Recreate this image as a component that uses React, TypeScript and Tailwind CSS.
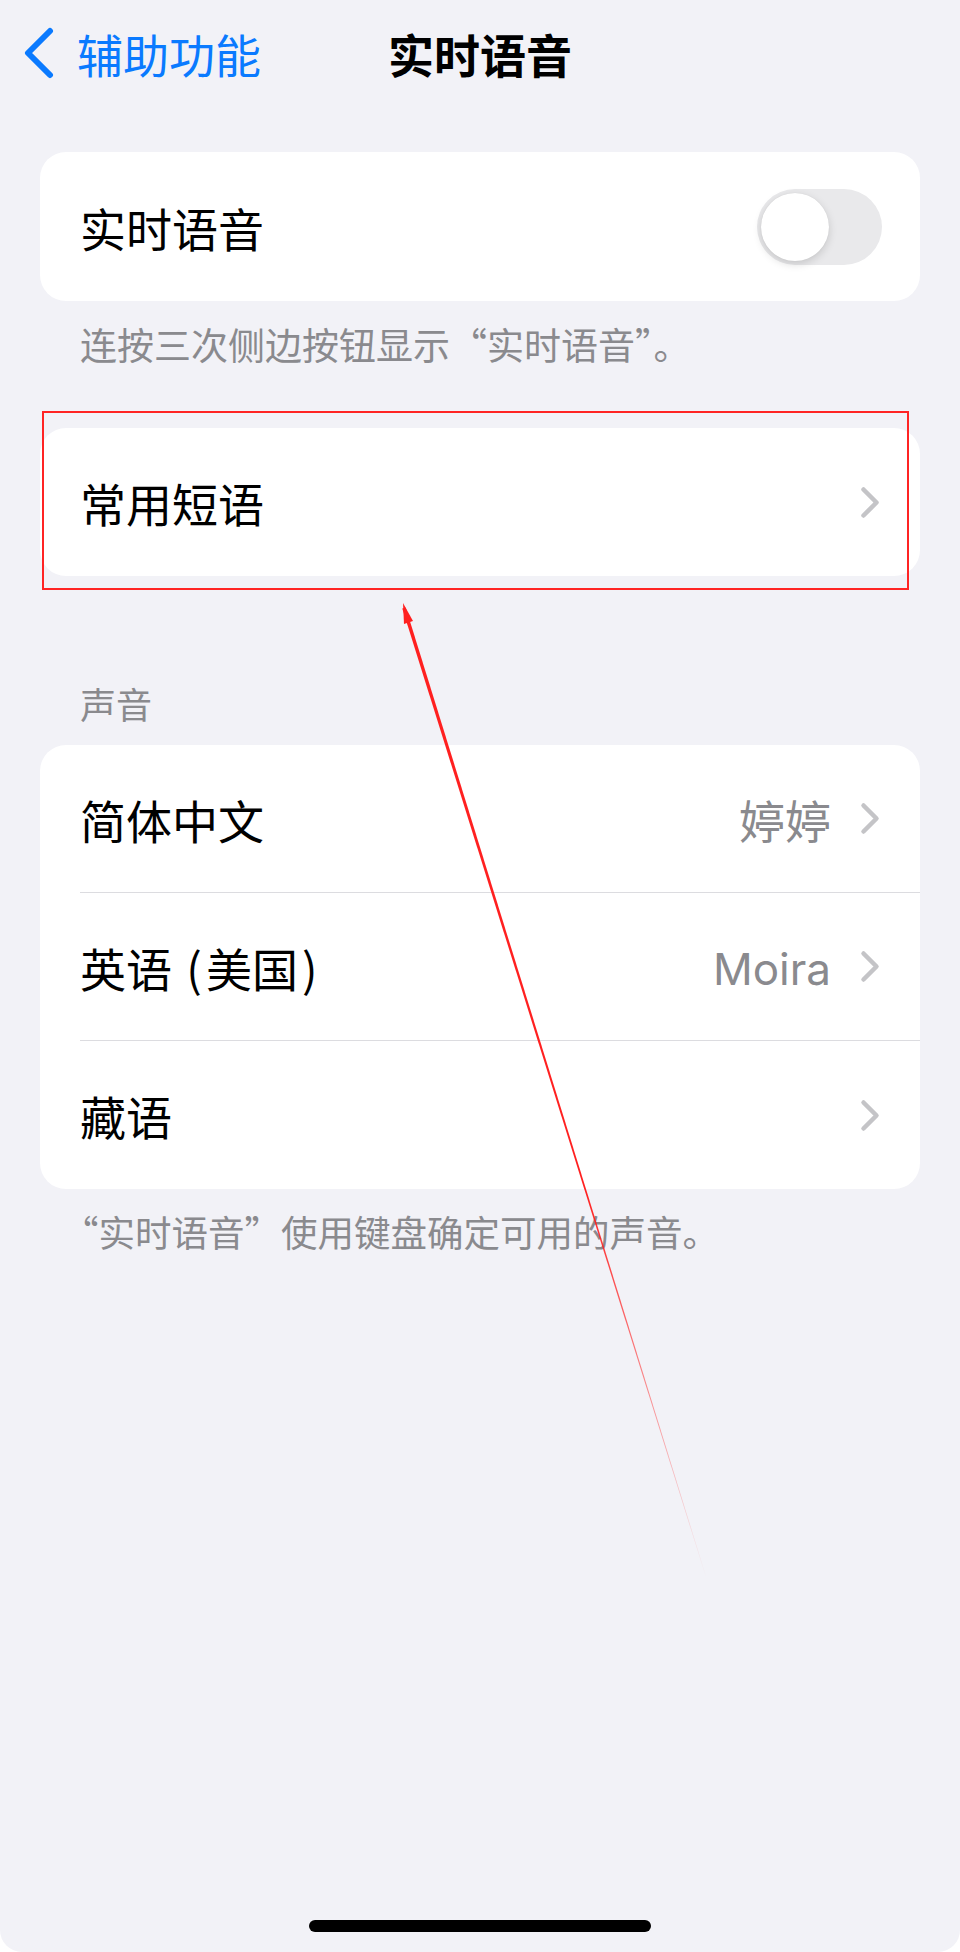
import React from "react";

const CJK = '"Noto Sans CJK SC", "Noto Sans", sans-serif';

function Chevron() {
  return (
    <svg width="20" height="33" viewBox="0 0 20 33" className="shrink-0">
      <path d="M3.5 3.5 L16.5 16.5 L3.5 29.5" fill="none" stroke="#c4c4c7" strokeWidth="4.5" strokeLinecap="round" strokeLinejoin="round" />
    </svg>
  );
}

function Row({ label, value, last }: { label: React.ReactNode; value?: React.ReactNode; last?: boolean }) {
  return (
    <div className="flex h-[148px] items-center pl-[40px]">
      <div className={`flex h-full flex-1 items-center pr-[40px] ${last ? "" : "border-b border-[#dcdce0]"}`}>
        <span className="flex-1 text-[46px] leading-none text-black">{label}</span>
        {value !== undefined && <span className="mr-[29px] text-[46px] leading-none text-[#8a8a8e]">{value}</span>}
        <Chevron />
      </div>
    </div>
  );
}

export default function App() {
  return (
    <div className="w-[960px] h-[1952px] bg-white" style={{ fontFamily: CJK }}>
      <div className="relative h-[1952px] w-[960px] overflow-hidden rounded-b-[22px] bg-[#f2f2f7]">
        {/* Nav bar */}
        <div className="relative flex h-[106px] items-center">
          <div className="flex items-center pl-[23px]">
            <svg width="32" height="52" viewBox="0 0 32 52">
              <path d="M27 4 L5 26 L27 48" fill="none" stroke="#0a7aff" strokeWidth="6" strokeLinecap="round" strokeLinejoin="round" />
            </svg>
            <span className="ml-[22px] text-[46px] leading-none text-[#0a7aff]">辅助功能</span>
          </div>
          <div className="pointer-events-none absolute left-0 right-0 top-0 flex h-[106px] items-center justify-center">
            <span className="text-[46px] font-bold leading-none text-black">实时语音</span>
          </div>
        </div>

        {/* Card 1 */}
        <div className="mx-[40px] mt-[46px] flex h-[149px] items-center rounded-[26px] bg-white pl-[40px] pr-[38px]">
          <span className="flex-1 text-[46px] leading-none text-black">实时语音</span>
          <div className="flex h-[76px] w-[125px] items-center rounded-full bg-[#e9e9eb] p-[4px]">
            <div className="h-[68px] w-[68px] rounded-full bg-white shadow-[0_3px_8px_rgba(0,0,0,0.15),0_0_1px_rgba(0,0,0,0.1)]" />
          </div>
        </div>
        <div className="flex h-[86px] items-center px-[80px]">
          <span className="text-[37px] leading-none text-[#8a8a8e]">
            连按三次侧边按钮显示“实时语音<span className="[font-feature-settings:'halt']">”</span>。
          </span>
        </div>

        {/* Card 2 */}
        <div className="mx-[40px] mt-[41px] rounded-[26px] bg-white">
          <div className="flex h-[148px] items-center pl-[40px] pr-[40px]">
            <span className="flex-1 text-[46px] leading-none text-black">常用短语</span>
            <Chevron />
          </div>
        </div>

        {/* Section header */}
        <div className="mt-[97px] flex h-[60px] items-center px-[80px]">
          <span className="text-[36px] leading-none text-[#8a8a8e]">声音</span>
        </div>

        {/* Card 3 */}
        <div className="mx-[40px] mt-[12px] overflow-hidden rounded-[26px] bg-white">
          <Row label="简体中文" value="婷婷" />
          <Row
            label={
              <>
                英语 <span className="mx-[4px]">(</span>美国<span className="ml-[4px]">)</span>
              </>
            }
            value={
              <span style={{ fontFamily: '"Inter", "Noto Sans", sans-serif' }} className="text-[44px]">
                Moira
              </span>
            }
          />
          <Row label="藏语" last />
        </div>
        <div className="flex h-[86px] items-center px-[80px]">
          <span className="text-[36.5px] leading-none text-[#8a8a8e]">
            <span className="-ml-[18px]">“</span>实时语音”使用键盘确定可用的声音。
          </span>
        </div>

        {/* Home indicator */}
        <div className="absolute bottom-[20px] left-[309px] h-[12px] w-[342px] rounded-full bg-black" />

        {/* Annotation box */}
        <div className="absolute left-[42px] top-[411px] h-[179px] w-[867px] border-[2.5px] border-[#ff2424]" />

        {/* Annotation arrow */}
        <svg className="pointer-events-none absolute left-0 top-0" width="960" height="1952" viewBox="0 0 960 1952">
          <defs>
            <linearGradient id="fade" gradientUnits="userSpaceOnUse" x1="404" y1="608" x2="707" y2="1580">
              <stop offset="0" stopColor="#ff2020" stopOpacity="1" />
              <stop offset="0.6" stopColor="#ff2020" stopOpacity="1" />
              <stop offset="1" stopColor="#ff2020" stopOpacity="0" />
            </linearGradient>
          </defs>
          <polygon points="405.7,607.5 402.3,608.5 706.8,1580.1 707.2,1579.9" fill="url(#fade)" />
          <polygon points="403,603 413,621 404,624" fill="#ff2020" />
        </svg>
      </div>
    </div>
  );
}
